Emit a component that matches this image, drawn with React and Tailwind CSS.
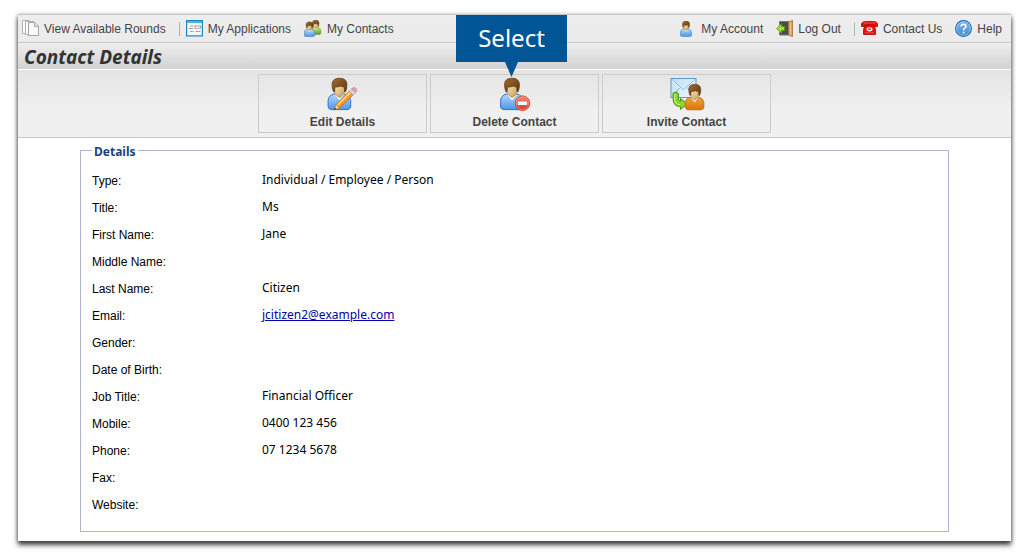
const details = [
  { label: "Type:", value: "Individual / Employee / Person" },
  { label: "Title:", value: "Ms" },
  { label: "First Name:", value: "Jane" },
  { label: "Middle Name:", value: "" },
  { label: "Last Name:", value: "Citizen" },
  { label: "Email:", value: "jcitizen2@example.com", email: true },
  { label: "Gender:", value: "" },
  { label: "Date of Birth:", value: "" },
  { label: "Job Title:", value: "Financial Officer" },
  { label: "Mobile:", value: "0400 123 456" },
  { label: "Phone:", value: "07 1234 5678" },
  { label: "Fax:", value: "" },
  { label: "Website:", value: "" },
];

// gradients shared by all icons
function IconDefs() {
  return (
    <svg className="absolute h-0 w-0" aria-hidden="true">
      <defs>
        <linearGradient id="hair" x1="0" y1="0" x2="1" y2="1">
          <stop offset="0" stopColor="#a06c30" />
          <stop offset="1" stopColor="#5f3510" />
        </linearGradient>
        <linearGradient id="face" x1="0" y1="0" x2="1" y2="1">
          <stop offset="0" stopColor="#fdebbd" />
          <stop offset="1" stopColor="#c9a05c" />
        </linearGradient>
        <linearGradient id="blue" x1="0" y1="0" x2="0" y2="1">
          <stop offset="0" stopColor="#b5d8fa" />
          <stop offset="1" stopColor="#4d97e6" />
        </linearGradient>
        <linearGradient id="green" x1="0" y1="0" x2="0" y2="1">
          <stop offset="0" stopColor="#c4e67a" />
          <stop offset="1" stopColor="#5f9e1d" />
        </linearGradient>
        <linearGradient id="orange" x1="0" y1="0" x2="0" y2="1">
          <stop offset="0" stopColor="#f0a43c" />
          <stop offset="1" stopColor="#d8770c" />
        </linearGradient>
        <linearGradient id="red" x1="0" y1="0" x2="0" y2="1">
          <stop offset="0" stopColor="#f58a76" />
          <stop offset="1" stopColor="#dc3325" />
        </linearGradient>
        <linearGradient id="mail" x1="0" y1="0" x2="1" y2="1">
          <stop offset="0" stopColor="#b9dff6" />
          <stop offset="1" stopColor="#eef8fe" />
        </linearGradient>
        <linearGradient id="help" x1="0" y1="0" x2="0" y2="1">
          <stop offset="0" stopColor="#7db9ec" />
          <stop offset="1" stopColor="#3f8bd3" />
        </linearGradient>
      </defs>
    </svg>
  );
}

function Person({ body = "url(#blue)", stroke = "#2e74c4" }) {
  return (
    <g>
      <path
        d="M4.600 30V23.500Q5 18.500 10.500 17L21 17Q26.500 18.500 27.200 23.500V30Q26.500 32.500 23.500 32.600H8.300Q5 32.500 4.600 30Z"
        fill={body}
        stroke={stroke}
      />
      <path d="M11.500 17.200L16 23.500L20.300 17.200Z" fill="#fff" />
      <path d="M12.800 13H19.200V18L16 21.300L12.800 18Z" fill="#c99f5c" />
      <path
        d="M11 8Q11 4.500 16 4.500T21 8V13Q20.400 19.200 16 19.400Q11.600 19.200 11 13Z"
        fill="url(#face)"
        stroke="#a5783c"
        strokeWidth=".5"
      />
      <path
        d="M9.800 14.500Q8.300 11 8.600 6.500Q9.300 1.300 16 1.200Q22.700 1.300 23.400 6.500Q23.700 11 22.200 14.500L21.100 15L20.800 10Q18.500 10 17.200 9Q15 10.200 11.500 10L11 15Z"
        fill="url(#hair)"
        stroke="#5b3410"
        strokeWidth=".7"
      />
    </g>
  );
}

function EditIcon() {
  return (
    <svg className="h-[34px] w-9 shrink-0" viewBox="1.500 0 36 34" aria-hidden="true">
      <Person />
      <path d="M10.500 33L12.600 27.300L16.300 31Z" fill="#f3d9a8" stroke="#936a35" strokeWidth=".6" />
      <path d="M10.500 33L11.300 30.600L12.900 32.100Z" fill="#333" />
      <path d="M12.600 27.300L25.800 14.200L29.600 18L16.300 31Z" fill="#f5932a" stroke="#c26a12" strokeWidth=".7" />
      <path d="M13.500 27.600L26.100 15.100L27.300 16.300L14.700 28.800Z" fill="#ffdc8d" />
      <path d="M25.800 14.200L28.200 11.800L32 15.600L29.600 18Z" fill="#d7dbe0" stroke="#8f959c" strokeWidth=".6" />
      <path
        d="M28.200 11.800L29.300 10.900Q31 9.900 32.500 11.400Q34 13 32.900 14.600L32 15.600Z"
        fill="#e89bc4"
        stroke="#c072a0"
        strokeWidth=".6"
      />
    </svg>
  );
}

function DeleteIcon() {
  return (
    <svg className="h-[34px] w-9 shrink-0" viewBox="1 0 36 34" aria-hidden="true">
      <Person />
      <circle cx="26.500" cy="26.200" r="7.300" fill="url(#red)" stroke="#c9392c" strokeWidth=".9" />
      <circle cx="26.500" cy="26.200" r="6.400" fill="none" stroke="#f9a99c" strokeWidth=".6" />
      <rect x="21.800" y="24.500" width="9.400" height="3.400" rx=".5" fill="#fff" />
    </svg>
  );
}

function InviteIcon() {
  return (
    <svg className="h-[34px] w-9 shrink-0" viewBox=".5 0 36 34" aria-hidden="true">
      <rect x="2.500" y="1.500" width="25" height="19" fill="url(#mail)" stroke="#5b9ccd" />
      <path d="M3.500 2.500L15 13L26.500 2.500M3.500 19.500L11.500 10.500M26.500 19.500L18.500 10.500" fill="none" stroke="#76b2dc" />
      <path d="M3.500 3.500L15 14L26.500 3.500" fill="none" stroke="#fff" strokeWidth=".7" />
      <path
        d="M4.600 16Q8 14 9.900 16.500V22Q10 24.200 12 24.300V21.500L19 27L12 32.500V29.500Q5 29.500 4.600 22.500Z"
        fill="#8fd32f"
        stroke="#4a9612"
      />
      <path d="M6.200 17.200V22.500Q6.500 27.500 11.500 27.800" fill="none" stroke="#d1f48f" />
      <g transform="translate(13.300 6.400) scale(.81)">
        <Person body="url(#orange)" stroke="#b8640c" />
      </g>
    </svg>
  );
}

function RoundsIcon() {
  return (
    <svg className="h-[17px] w-[17px] shrink-0" viewBox="0 0 17 17" aria-hidden="true">
      <path d="M.5 .5H7.500V13.500H.5Z" fill="#fafafa" stroke="#b4b4b4" />
      <path d="M3.500 1.500H11.500V14.500H3.500Z" fill="#fafafa" stroke="#b0b0b0" />
      <path d="M6.500 2.500H13L16.500 6V15.500H6.500Z" fill="#f8f8f8" stroke="#a4a4a4" />
      <path d="M12.500 2.500V6.500H16.500" fill="#ddd" stroke="#aaa" />
    </svg>
  );
}

function ApplicationsIcon() {
  return (
    <svg className="h-[17px] w-[17px] shrink-0" viewBox="0 0 17 17" aria-hidden="true">
      <rect x=".6" y=".6" width="15.800" height="15.300" fill="#f4f7f8" stroke="#2383b8" strokeWidth="1.200" />
      <path d="M1 2H16" stroke="#48b4e4" strokeWidth="2" />
      <path
        d="M4 6H7.500M2.500 8.500H7M4 11.500H7.500M9 8.500V6H14.500V8.500M9.500 11.500H14.500"
        fill="none"
        stroke="#a4a4a4"
        strokeWidth="1.200"
      />
      <path d="M9 8.500H14.500" stroke="#b8b8b8" />
    </svg>
  );
}

function ContactsIcon() {
  return (
    <svg className="h-[17px] w-[18px] shrink-0" viewBox="0 0 18 17" aria-hidden="true">
      <g transform="translate(4.300 -.5) scale(.46)">
        <Person body="url(#green)" stroke="#568f1c" />
      </g>
      <g transform="translate(-2 1.200) scale(.47)">
        <Person />
      </g>
    </svg>
  );
}

function AccountIcon() {
  return (
    <svg className="h-4 w-4 shrink-0" viewBox="0 0 16 16" aria-hidden="true">
      <g transform="translate(-1.800 -.5) scale(.49)">
        <Person />
      </g>
    </svg>
  );
}

function LogOutIcon() {
  return (
    <svg className="h-[17px] w-[17px] shrink-0" viewBox="0 0 17 17" aria-hidden="true">
      <path d="M3.500 1.500H13V15H3.500Z" fill="#4a4d50" stroke="#74777a" />
      <path d="M12.500 2L16.500 .5V16.500L12.500 15Z" fill="#d9a161" stroke="#a8713a" strokeWidth=".8" />
      <path d="M14.500 2.500V14.500" stroke="#efc793" />
      <path d="M.5 8.500L5.500 3.800V6.500H8.500V10.500H5.500V13.200Z" fill="#a0e02f" stroke="#5a9a10" strokeWidth=".8" />
    </svg>
  );
}

function PhoneIcon() {
  return (
    <svg className="h-[15px] w-[17px] shrink-0" viewBox="0 0 17 15" aria-hidden="true">
      <path
        d="M.5 5V3Q1 .6 4.500 .5H12.500Q16 .6 16.500 3V5.500H12.500V4H4.500V5.500H.5Z"
        fill="#e0120e"
        stroke="#b80c0c"
        strokeWidth=".9"
      />
      <path d="M4 4.500H13L14.500 8.500V13.500H2.500V8.500Z" fill="#e0120e" stroke="#b80c0c" strokeWidth=".9" />
      <ellipse cx="8.500" cy="8.300" rx="3" ry="2.100" fill="#fff" />
      <ellipse cx="8.500" cy="8.300" rx="1.700" ry="1" fill="#e03a34" />
      <path d="M4 11.800H13" stroke="#f7605a" strokeWidth=".7" />
      <path d="M2.500 2H14.500" stroke="#f7706a" strokeWidth=".7" />
    </svg>
  );
}

function HelpIcon() {
  return (
    <svg className="h-[17px] w-[17px] shrink-0" viewBox="0 0 17 17" aria-hidden="true">
      <circle cx="8.500" cy="8.500" r="7.900" fill="url(#help)" stroke="#1f66ab" strokeWidth="1.100" />
      <circle cx="8.500" cy="8.500" r="6.900" fill="none" stroke="#a9d3f5" strokeWidth=".7" />
      <path
        d="M6 6.500Q6.200 4.200 8.600 4.200Q11 4.300 11 6.300Q11 7.500 9.500 8.300Q8.600 8.900 8.600 10.200"
        fill="none"
        stroke="#fff"
        strokeWidth="1.500"
      />
      <circle cx="8.600" cy="12.400" r="1" fill="#fff" />
    </svg>
  );
}

function NavLink({ icon, children }) {
  return (
    <a href="#" className="flex items-center gap-[5px]">
      {icon}
      {children}
    </a>
  );
}

function Separator() {
  return <span className="-mr-[7px] h-[14px] w-px bg-[#b5b3a2]" />;
}

function ActionButton({ icon, children }) {
  return (
    <button
      type="button"
      className="flex h-[59px] w-[169px] cursor-pointer flex-col items-center border border-[#cccccc] pt-[2px] text-xs leading-[22px] font-bold text-[#444444]"
    >
      {icon}
      {children}
    </button>
  );
}

function App() {
  return (
    <div className="bg-white pt-[14px] pr-6 pb-[19px] pl-[18px] font-['Liberation_Sans',Arial,sans-serif] text-black">
      <IconDefs />
      <div className="bg-white shadow-[0_4px_5px_rgba(0,0,0,0.7),0_1px_4px_rgba(0,0,0,0.4)]">
        {/* top menu */}
        <nav className="flex h-7 items-center justify-between border-t border-[#c8c8c8] bg-linear-to-b from-[#ededed] to-[#ebebeb] pr-[9px] pl-1 text-xs text-[#444444]">
          <div className="flex items-center gap-[13px]">
            <NavLink icon={<RoundsIcon />}>View Available Rounds</NavLink>
            <Separator />
            <NavLink icon={<ApplicationsIcon />}>My Applications</NavLink>
            <NavLink icon={<ContactsIcon />}>My Contacts</NavLink>
          </div>
          <div className="flex items-center gap-[13px]">
            <NavLink icon={<AccountIcon />}>My Account</NavLink>
            <NavLink icon={<LogOutIcon />}>Log Out</NavLink>
            <Separator />
            <NavLink icon={<PhoneIcon />}>Contact Us</NavLink>
            <NavLink icon={<HelpIcon />}>Help</NavLink>
          </div>
        </nav>

        <header className="h-7 border-t border-b border-t-[#c8c8c8] border-b-white bg-linear-to-b from-[#eeeeee] to-[#d2d2d2] pl-[6px]">
          <h1 className="font-['Noto_Sans',sans-serif] text-[19px] leading-7 font-bold text-[#333333] italic">
            Contact Details
          </h1>
        </header>

        {/* actions */}
        <div className="flex h-[68px] justify-center gap-[3px] border-b border-[#c8c8c8] bg-linear-to-b from-[#e4e4e4] to-[#f0f0f0] to-60% pt-1">
          <ActionButton icon={<EditIcon />}>Edit Details</ActionButton>
          <div className="relative">
            <ActionButton icon={<DeleteIcon />}>Delete Contact</ActionButton>
            <div className="absolute bottom-full left-[26px] mb-3 h-[47px] w-[111px] bg-[#005596] text-center font-['Noto_Sans',sans-serif] text-2xl leading-[46px] text-white">
              Select
              <svg className="absolute top-full left-[49px] h-[15px] w-[13px]" viewBox="0 0 13 15" aria-hidden="true">
                <path d="M0 0H13L6.500 15Z" fill="#005596" />
              </svg>
            </div>
          </div>
          <ActionButton icon={<InviteIcon />}>Invite Contact</ActionButton>
        </div>

        <div className="px-[62px] pt-px pb-[9px]">
          <fieldset className="border border-[#b0b3cc] px-[11px] pb-3">
            <legend className="px-[2px] pt-1 font-['Noto_Sans',sans-serif] text-xs leading-[18px] font-bold text-[#1e3f80]">
              Details
            </legend>
            <dl className="pt-[7px] text-xs">
              {details.map((item) => (
                <div key={item.label} className="flex h-[27px]">
                  <dt className="w-[170px] leading-[27px]">{item.label}</dt>
                  <dd className="font-['Noto_Sans',sans-serif] leading-6">
                    {item.email ? (
                      <a href="mailto:jcitizen2@example.com" className="text-[#0000aa] underline">
                        {item.value}
                      </a>
                    ) : (
                      item.value
                    )}
                  </dd>
                </div>
              ))}
            </dl>
          </fieldset>
        </div>
      </div>
    </div>
  );
}

export default App;
